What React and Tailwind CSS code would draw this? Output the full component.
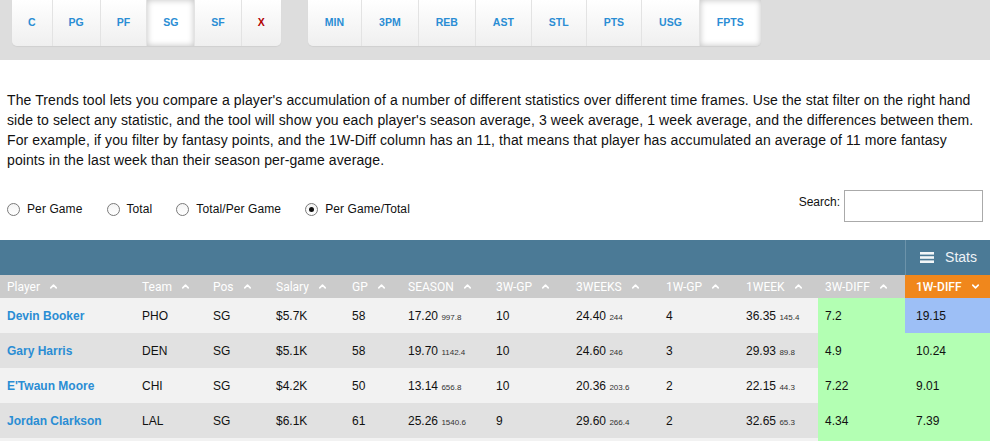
import React, { useState } from "react";
import { ChevronUp, ChevronDown } from "lucide-react";

const positions = ["C", "PG", "PF", "SG", "SF", "X"];
const stats = ["MIN", "3PM", "REB", "AST", "STL", "PTS", "USG", "FPTS"];

const columns = [
  "Player",
  "Team",
  "Pos",
  "Salary",
  "GP",
  "SEASON",
  "3W-GP",
  "3WEEKS",
  "1W-GP",
  "1WEEK",
  "3W-DIFF",
];

const players = [
  {
    name: "Devin Booker",
    team: "PHO",
    pos: "SG",
    salary: "$5.7K",
    gp: "58",
    season: ["17.20", "997.8"],
    gp3: "10",
    week3: ["24.40", "244"],
    gp1: "4",
    week1: ["36.35", "145.4"],
    diff3: "7.2",
    diff1: "19.15",
    top: true,
  },
  {
    name: "Gary Harris",
    team: "DEN",
    pos: "SG",
    salary: "$5.1K",
    gp: "58",
    season: ["19.70", "1142.4"],
    gp3: "10",
    week3: ["24.60", "246"],
    gp1: "3",
    week1: ["29.93", "89.8"],
    diff3: "4.9",
    diff1: "10.24",
  },
  {
    name: "E'Twaun Moore",
    team: "CHI",
    pos: "SG",
    salary: "$4.2K",
    gp: "50",
    season: ["13.14", "656.8"],
    gp3: "10",
    week3: ["20.36", "203.6"],
    gp1: "2",
    week1: ["22.15", "44.3"],
    diff3: "7.22",
    diff1: "9.01",
  },
  {
    name: "Jordan Clarkson",
    team: "LAL",
    pos: "SG",
    salary: "$6.1K",
    gp: "61",
    season: ["25.26", "1540.6"],
    gp3: "9",
    week3: ["29.60", "266.4"],
    gp1: "2",
    week1: ["32.65", "65.3"],
    diff3: "4.34",
    diff1: "7.39",
  },
];

const gridCols =
  "grid grid-cols-[135px_71px_63px_76px_56px_88px_80px_90px_80px_79px_87px_85px]";

const radios = ["Per Game", "Total", "Total/Per Game", "Per Game/Total"];

const ButtonGroup = ({ items, active, pad }) => (
  <div className="flex h-[46px] rounded-b-[5px] overflow-hidden shadow-[0_1px_1px_rgba(0,0,0,0.06)]">
    {items.map((item, i) => (
      <button
        key={item}
        className={`h-[46px] ${pad} text-[10.5px] font-bold ${
          i < items.length - 1 ? "border-r border-[#e3e3e3]" : ""
        } ${
          item === active
            ? "bg-white shadow-[inset_0_0_6px_rgba(0,0,0,0.25)]"
            : "bg-gradient-to-b from-white to-[#efefef]"
        } ${item === "X" ? "text-[#b20000]" : "text-[#2a8dd4]"}`}
      >
        {item}
      </button>
    ))}
  </div>
);

const Num = ({ v }) => (
  <span>
    {v[0]} <span className="text-[8px] text-[#333]">{v[1]}</span>
  </span>
);

const App = () => {
  const [mode, setMode] = useState("Per Game/Total");

  return (
    <div
      className="w-[990px] h-[441px] overflow-hidden bg-white text-[#111]"
      style={{ fontFamily: "Arial, 'Liberation Sans', sans-serif" }}
    >
      {/* Filter buttons */}
      <div className="h-[60px] bg-[#dddddd] flex pl-[12px] gap-[27px]">
        <ButtonGroup items={positions} active="SG" pad="px-[16px]" />
        <ButtonGroup items={stats} active="FPTS" pad="px-[17px]" />
      </div>

      {/* Description */}
      <p className="mt-[30px] px-[7px] text-[14px] leading-[20px] tracking-[0.1px] text-[#111]">
        The Trends tool lets you compare a player's accumulation of a number of
        different statistics over different time frames. Use the stat filter on
        the right hand side to select any statistic, and the tool will show you
        each player's season average, 3 week average, 1 week average, and the
        differences between them. For example, if you filter by fantasy points,
        and the 1W-Diff column has an 11, that means that player has accumulated
        an average of 11 more fantasy points in the last week than their season
        per-game average.
      </p>

      {/* Mode + search */}
      <div className="h-[70px] flex justify-between items-start">
        <div className="mt-[29px] h-[20px] flex items-center pl-[7px] gap-[24px] text-[12px] tracking-[0.1px]">
          {radios.map((r) => (
            <label
              key={r}
              className="flex items-center gap-[7px] cursor-pointer"
              onClick={() => setMode(r)}
            >
              <span className="w-[13px] h-[13px] rounded-full border border-[#7a7a7a] bg-gradient-to-b from-[#f4f4f4] to-white flex items-center justify-center">
                {mode === r && (
                  <span className="w-[5px] h-[5px] rounded-full bg-[#111]" />
                )}
              </span>
              {r}
            </label>
          ))}
        </div>
        <div className="mt-[20px] mr-[7px] flex items-start gap-[4px] text-[12px]">
          <span className="mt-[3px]">Search:</span>
          <input
            type="text"
            className="w-[139px] h-[32px] border border-[#aaaaaa] bg-white outline-none px-1"
          />
        </div>
      </div>

      {/* Table */}
      <div className="h-[35px] bg-[#4b7a96] flex justify-end">
        <div className="w-[85px] border-l border-[#6c93aa] flex items-center justify-end pr-[13px] gap-[11px] text-[14px] text-[#eef3f6]">
          <svg width="14" height="11" viewBox="0 0 14 11">
            <rect x="0" y="0" width="14" height="2.6" fill="#f2f6f8" />
            <rect x="0" y="4.2" width="14" height="2.6" fill="#f2f6f8" />
            <rect x="0" y="8.4" width="14" height="2.6" fill="#f2f6f8" />
          </svg>
          Stats
        </div>
      </div>

      <div
        className={`${gridCols} h-[23px] bg-[#cbcbcb] text-white text-[12px]`}
        style={{ fontFamily: "Roboto, Arial, sans-serif" }}
      >
        {columns.map((c) => (
          <div key={c} className="flex items-center pl-[7px] gap-[8px]">
            {c}
            <ChevronUp size={11} strokeWidth={3.5} />
          </div>
        ))}
        <div className="flex items-center pl-[11px] gap-[8px] bg-[#f0871c] font-medium">
          1W-DIFF
          <ChevronDown size={11} strokeWidth={3.5} />
        </div>
      </div>

      {players.map((p, i) => (
        <div
          key={p.name}
          className={`${gridCols} h-[35px] text-[12px] ${
            i % 2 === 0 ? "bg-[#f2f2f2]" : "bg-[#e1e1e1]"
          }`}
        >
          <div className="flex items-center pl-[7px] font-bold text-[#2a8dd4]">
            {p.name}
          </div>
          <div className="flex items-center pl-[7px]">{p.team}</div>
          <div className="flex items-center pl-[7px]">{p.pos}</div>
          <div className="flex items-center pl-[7px]">{p.salary}</div>
          <div className="flex items-center pl-[7px]">{p.gp}</div>
          <div className="flex items-center pl-[7px]">
            <Num v={p.season} />
          </div>
          <div className="flex items-center pl-[7px]">{p.gp3}</div>
          <div className="flex items-center pl-[7px]">
            <Num v={p.week3} />
          </div>
          <div className="flex items-center pl-[7px]">{p.gp1}</div>
          <div className="flex items-center pl-[7px]">
            <Num v={p.week1} />
          </div>
          <div className="flex items-center pl-[7px] bg-[#b3ffb3]">
            {p.diff3}
          </div>
          <div
            className={`flex items-center pl-[11px] ${
              p.top ? "bg-[#9dbff6]" : "bg-[#b3ffb3]"
            }`}
          >
            {p.diff1}
          </div>
        </div>
      ))}

      {/* next row, just starting below the fold */}
      <div className={`${gridCols} h-[35px] bg-[#f2f2f2]`}>
        <div className="col-span-10" />
        <div className="bg-[#b3ffb3]" />
        <div className="bg-[#b3ffb3]" />
      </div>
    </div>
  );
};

export default App;
